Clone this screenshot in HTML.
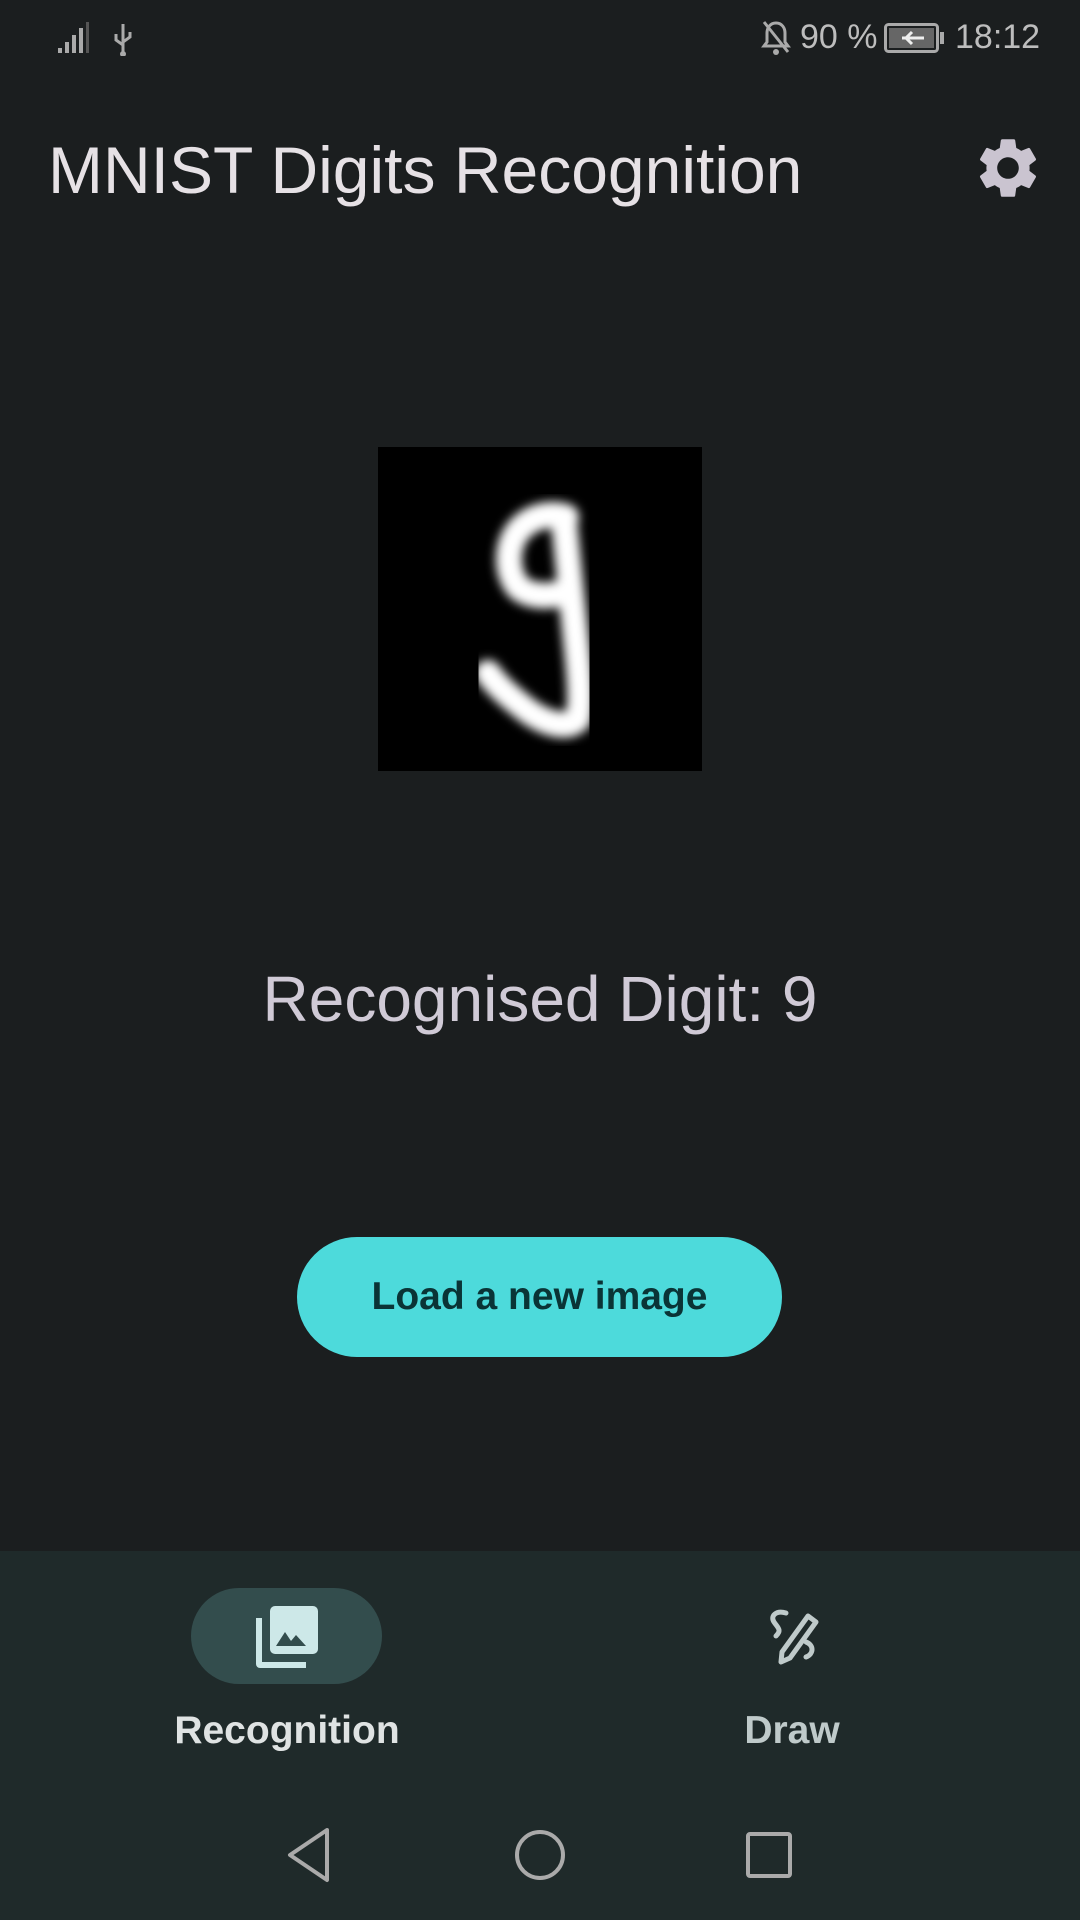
<!DOCTYPE html>
<html><head><meta charset="utf-8"><style>
html,body{margin:0;padding:0}
body{width:1080px;height:1920px;background:#1b1e1f;position:relative;overflow:hidden;font-family:"Liberation Sans",sans-serif;color:#e6e1e5}
.abs{position:absolute}
.sb{top:18px;font-size:34px;color:#bdbdbd}
</style></head><body>
<svg class="abs" style="left:58px;top:22px" width="80" height="34" viewBox="0 0 80 34">
 <rect x="0" y="26" width="4" height="5" fill="#aaa"/><rect x="7" y="20" width="4" height="11" fill="#aaa"/><rect x="14" y="13" width="4" height="18" fill="#aaa"/><rect x="21" y="6" width="4" height="25" fill="#aaa"/><rect x="28" y="0" width="3" height="31" fill="#555"/>
 <g stroke="#aaa" stroke-width="3" fill="none"><path d="M65 2v30M58 12v6l7 5M72 10v5l-7 5"/></g><circle cx="65" cy="32" r="3" fill="#aaa"/>
</svg>
<svg class="abs" style="left:760px;top:20px" width="32" height="36" viewBox="0 0 32 36"><path d="M16 3c-6 0-9 5-9 10v9l-3 4h24l-3-4v-9c0-5-3-10-9-10z" fill="none" stroke="#aaa" stroke-width="3"/><path d="M4 2l24 30" stroke="#aaa" stroke-width="3"/><circle cx="16" cy="32" r="3" fill="#aaa"/></svg>
<div class="abs sb" style="left:800px">90 %</div>
<svg class="abs" style="left:884px;top:23px" width="62" height="30" viewBox="0 0 62 30"><rect x="1.5" y="1.5" width="52" height="27" rx="3" fill="none" stroke="#aaa" stroke-width="3"/><rect x="5" y="5" width="45" height="20" fill="#666"/><rect x="56" y="9" width="4" height="12" fill="#aaa"/><path d="M18 15h22M28 9l-6 6 6 6" stroke="#eee" stroke-width="3" fill="none"/></svg>
<div class="abs sb" style="left:955px">18:12</div>
<div class="abs" style="left:48px;top:132px;font-size:66px;color:#e6e1e5;letter-spacing:0px">MNIST Digits Recognition</div>
<svg class="abs" style="left:972px;top:132px" width="72" height="72" viewBox="0 0 24 24"><path fill="#cac4d0" d="M19.14 12.94c.04-.3.06-.61.06-.94 0-.32-.02-.64-.07-.94l2.030-1.58a.49.49 0 0 0 .12-.61l-1.92-3.32a.488.488 0 0 0-.59-.22l-2.39.96c-.5-.38-1.030-.7-1.62-.94l-.36-2.54a.484.484 0 0 0-.48-.41h-3.84c-.24 0-.43.17-.47.41l-.36 2.54c-.59.24-1.13.57-1.62.94l-2.39-.96c-.22-.08-.47 0-.59.22L2.74 8.87c-.12.21-.08.47.12.61l2.030 1.58c-.05.3-.09.63-.09.94s.02.64.07.94l-2.030 1.58a.49.49 0 0 0-.12.61l1.92 3.32c.12.22.37.29.59.22l2.39-.96c.5.38 1.030.7 1.62.94l.36 2.54c.05.24.24.41.48.41h3.84c.24 0 .44-.17.47-.41l.36-2.54c.59-.24 1.13-.56 1.62-.94l2.39.96c.22.08.47 0 .59-.22l1.92-3.32c.12-.22.07-.47-.12-.61l-2.010-1.58zM12 15.6c-1.98 0-3.6-1.62-3.6-3.6s1.62-3.6 3.6-3.6 3.6 1.62 3.6 3.6-1.62 3.6-3.6 3.6z"/></svg>
<svg class="abs" style="left:378px;top:447px" width="324" height="324" viewBox="0 0 324 324">
 <defs><filter id="b"><feGaussianBlur stdDeviation="5"/></filter></defs>
 <rect width="324" height="324" fill="#000"/>
 <g filter="url(#b)" fill="none" stroke="#fff" stroke-width="26" stroke-linecap="round" stroke-linejoin="round">
  <path d="M188 70C168 64 150 72 140 84 128 100 128 124 140 140 152 150 170 150 184 146"/>
  <path d="M186 74C190 110 194 150 198 193 202 230 204 258 200 272 190 282 170 278 150 264 132 250 118 238 110 226"/>
 </g>
</svg>
<div class="abs" style="left:0;width:1080px;text-align:center;top:962px;font-size:64px;color:#d0cad6">Recognised Digit: 9</div>
<div class="abs" style="left:297px;top:1237px;width:485px;height:120px;border-radius:60px;background:#4ddadb;color:#0a3436;font-size:39px;font-weight:bold;text-align:center;line-height:120px">Load a new image</div>
<div class="abs" style="left:0;top:1551px;width:1080px;height:369px;background:#1f2a2a"></div>
<div class="abs" style="left:191px;top:1588px;width:191px;height:96px;border-radius:48px;background:#334d4d"></div>
<svg class="abs" style="left:256px;top:1606px" width="62" height="62" viewBox="0 0 62 62">
 <rect x="14" y="0" width="48" height="48" rx="5" fill="#cde8e8"/>
 <path d="M0 12h6v44h44v6H4a4 4 0 0 1-4-4z" fill="#cde8e8"/>
 <path d="M20 40l9-14 6 9 5-6 10 11z" fill="#334d4d"/>
</svg>
<svg class="abs" style="left:764px;top:1608px" width="56" height="58" viewBox="0 0 56 58" fill="none" stroke="#bfcaca" stroke-width="5" stroke-linecap="round">
 <path d="M22 5C12 2 6 8 10 14c4 6 8 8 2 14"/>
 <path d="M44 8l8 6-26 36-9 4 1-10z" stroke-linejoin="round"/>
 <path d="M42 34c8 3 8 12 0 15"/>
</svg>
<div class="abs" style="left:87px;width:400px;text-align:center;top:1709px;font-size:39px;font-weight:bold;color:#dfe3e3">Recognition</div>
<div class="abs" style="left:592px;width:400px;text-align:center;top:1709px;font-size:39px;font-weight:bold;color:#bfcaca">Draw</div>
<svg class="abs" style="left:0;top:1825px" width="1080" height="60" viewBox="0 0 1080 60" fill="none" stroke="#aaa" stroke-width="4">
 <path d="M327 5L290 30l37 25z" stroke-linejoin="round"/>
 <circle cx="540" cy="30" r="23"/>
 <rect x="748" y="9" width="42" height="42" rx="2"/>
</svg>
</body></html>
